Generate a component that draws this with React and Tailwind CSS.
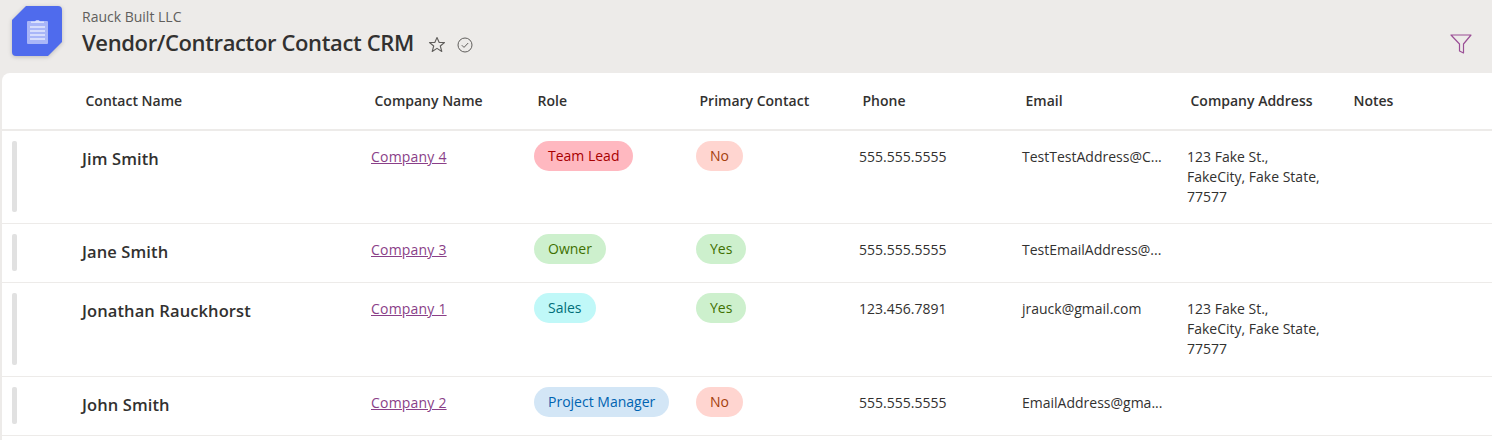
import React from 'react';

const cols = 'grid grid-cols-[80px_289px_163px_162px_163px_163px_165px_163px_1fr]';

const pillColors = {
  lead: 'bg-[#ffb8c0] text-[#a80000]',
  no: 'bg-[#ffd5d0] text-[#a4400c]',
  yes: 'bg-[#cdf0cd] text-[#3f7000]',
  sales: 'bg-[#c0f8f8] text-[#006f78]',
  pm: 'bg-[#d3e6f6] text-[#0063b1]',
};

const rows = [
  { name: 'Jim Smith', company: 'Company 4', role: 'Team Lead', roleColor: 'lead', primary: 'No', phone: '555.555.5555', email: 'TestTestAddress@C...', address: true, h: 'h-[93px]' },
  { name: 'Jane Smith', company: 'Company 3', role: 'Owner', roleColor: 'yes', primary: 'Yes', phone: '555.555.5555', email: 'TestEmailAddress@...', h: 'h-[59px]' },
  { name: 'Jonathan Rauckhorst', company: 'Company 1', role: 'Sales', roleColor: 'sales', primary: 'Yes', phone: '123.456.7891', email: 'jrauck@gmail.com', address: true, h: 'h-[94px]' },
  { name: 'John Smith', company: 'Company 2', role: 'Project Manager', roleColor: 'pm', primary: 'No', phone: '555.555.5555', email: 'EmailAddress@gma...', h: 'h-[59px]' },
];

const headers = ['Contact Name', 'Company Name', 'Role', 'Primary Contact', 'Phone', 'Email', 'Company Address', 'Notes'];

function Logo() {
  return (
    <svg width="50" height="50" viewBox="0 0 50 50" className="drop-shadow-[0_1px_2px_rgba(0,0,0,0.2)]">
      <path d="M14 0H46a4 4 0 0 1 4 4V36L36 50H4a4 4 0 0 1-4-4V14z" fill="#4f6bed" />
      <rect x="15" y="15" width="21" height="23" rx="1" fill="#a9b6f8" />
      <path d="M19 15.500h4c.4-1.800 4.600-1.800 5 0h4v1.500H19z" fill="#dbe1fc" />
      <path d="M18 21h15M18 25h15M18 29h15M18 33h15" stroke="#e6eafd" strokeWidth="1.300" />
    </svg>
  );
}

function Pill({ color, children }) {
  return (
    <span className={`inline-flex h-[30px] items-center rounded-[15px] px-[14px] text-sm whitespace-nowrap ${pillColors[color]}`}>
      {children}
    </span>
  );
}

export default function App() {
  return (
    <div className="h-[440px] w-[1492px] overflow-hidden bg-[#edebe9] font-['Open_Sans','Noto_Sans',sans-serif] text-[#323130]">
      <div className="flex h-[73px]">
        <div className="pl-3 pt-[6px]">
          <Logo />
        </div>
        <div className="ml-5 flex-1 pt-[8px]">
          <div className="text-sm leading-[18px] text-[#605e5c]">Rauck Built LLC</div>
          <div className="mt-[2px] flex items-center">
            <h1 className="text-[22px] leading-[28px] font-semibold tracking-[-0.37px]">Vendor/Contractor Contact CRM</h1>
            <svg width="18" height="18" viewBox="0 0 18 18" fill="none" stroke="#605e5c" strokeWidth="1.100" className="ml-[14px] mt-[6px]">
              <path d="M9 1.500l2.200 5h5.300l-4.200 3.500 1.500 5.500L9 12.400 4.200 15.500l1.500-5.500L1.500 6.500h5.300z" strokeLinejoin="round" />
            </svg>
            <svg width="16" height="16" viewBox="0 0 16 16" fill="none" stroke="#605e5c" strokeWidth="1" className="ml-[11px] mt-[6px]">
              <circle cx="8" cy="8" r="7" />
              <path d="M4.800 8.200l2.200 2.200 4.200-4.400" />
            </svg>
          </div>
        </div>
        <div className="pr-[20px] pt-[34px]">
          <svg width="22" height="20" viewBox="0 0 22 20" fill="none" stroke="#9b4f96" strokeWidth="1.200">
            <path d="M1 1h20l-7.500 9v9l-4-2v-7z" strokeLinejoin="round" />
          </svg>
        </div>
      </div>

      <div className="ml-[2px] h-[367px] rounded-tl-lg bg-white">
        <div className={`${cols} h-[58px] items-center border-b-2 border-[#edebe9] text-sm font-semibold`}>
          <div />
          {headers.map((h) => (
            <div key={h} className="pl-[3.5px]">{h}</div>
          ))}
        </div>
        {rows.map((r) => (
          <div key={r.name} className={`${cols} ${r.h} border-b border-[#edebe9] py-[10px] text-sm`}>
            <div className="pb-px pl-[10px]">
              <div className="h-full w-[5px] rounded-[2px] bg-[#e1e1e1]" />
            </div>
            <div className="pt-[5.5px] text-[16.5px] leading-[24px] font-semibold tracking-[0.1px]">{r.name}</div>
            <div className="pt-[6px] leading-[20px] tracking-[0.2px]">
              <a href="#" className="text-[#8a3f88] underline">{r.company}</a>
            </div>
            <div><Pill color={r.roleColor}>{r.role}</Pill></div>
            <div><Pill color={r.primary === 'Yes' ? 'yes' : 'no'}>{r.primary}</Pill></div>
            <div className="pt-[6px] leading-[20px]">{r.phone}</div>
            <div className="pt-[6px] leading-[20px]">{r.email}</div>
            <div className="pt-[6px] leading-[20px]">
              {r.address && (
                <>
                  123 Fake St.,<br />FakeCity, Fake State,<br />77577
                </>
              )}
            </div>
            <div />
          </div>
        ))}
      </div>
    </div>
  );
}
